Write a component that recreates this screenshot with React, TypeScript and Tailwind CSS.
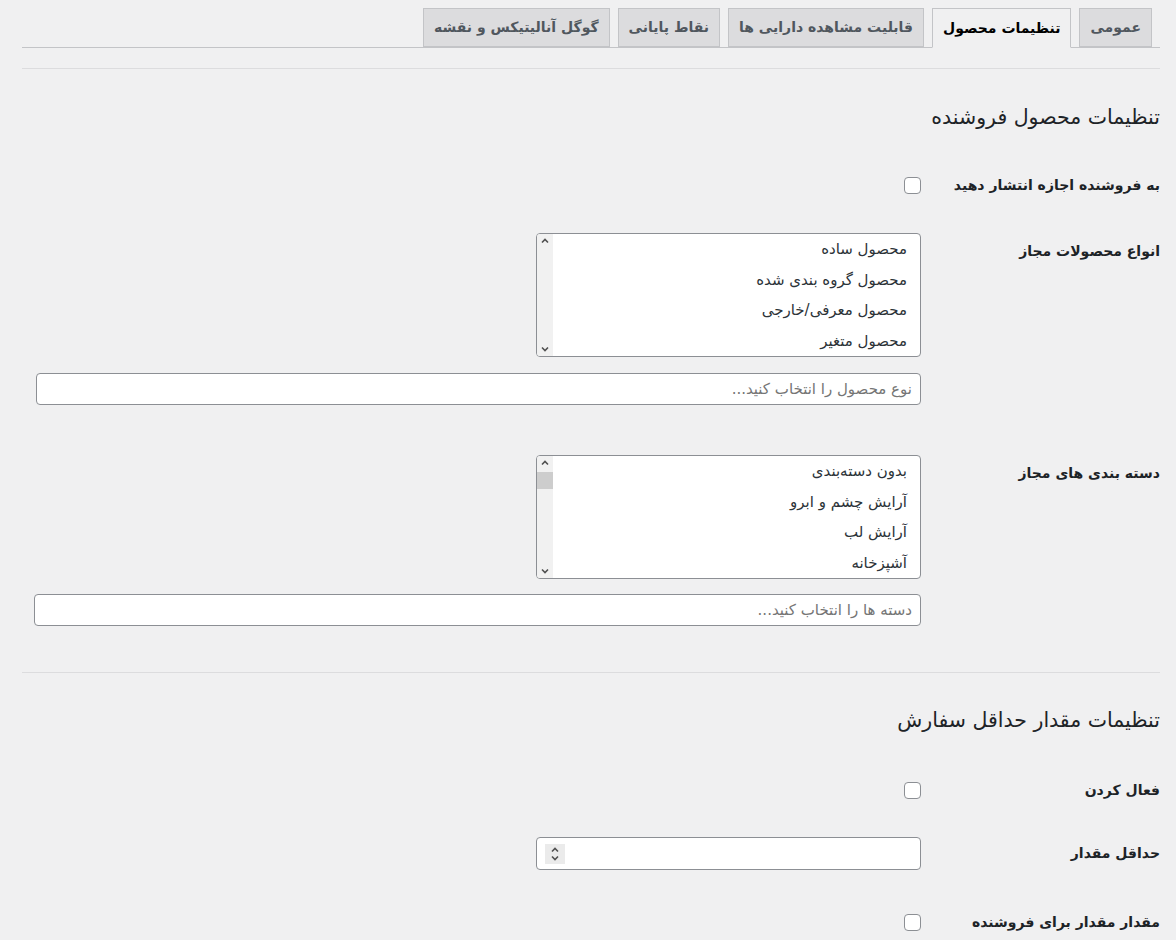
import React from "react";

/* ---------------- DATA ---------------- */
const tabs = [
    { label: "عمومی", active: false },
    { label: "تنظیمات محصول", active: true },
    { label: "قابلیت مشاهده دارایی ها", active: false },
    { label: "نقاط پایانی", active: false },
    { label: "گوگل آنالیتیکس و نقشه", active: false },
];

const productTypes = ["محصول ساده", "محصول گروه بندی شده", "محصول معرفی/خارجی", "محصول متغیر"];
const categories = ["بدون دسته‌بندی", "آرایش چشم و ابرو", "آرایش لب", "آشپزخانه"];

const font = { fontFamily: '"DejaVu Sans", "Noto Sans", sans-serif' };

/* ---------------- SMALL PARTS ---------------- */
function Chevron({ up }: { up?: boolean }) {
    return (
        <svg width="8" height="6" viewBox="0 0 8 6" className="text-[#505050]">
            <path
                d={up ? "M1 4.5 L4 1.5 L7 4.5" : "M1 1.5 L4 4.5 L7 1.5"}
                fill="none"
                stroke="currentColor"
                strokeWidth="1.6"
            />
        </svg>
    );
}

function Checkbox() {
    return <span className="block w-[17px] h-[17px] rounded-[4px] border border-[#8c8f94] bg-white" />;
}

function MultiSelect({ items, thumb }: { items: string[]; thumb?: boolean }) {
    return (
        <div className="w-[385px] h-[124px] border border-[#8c8f94] rounded-[4px] bg-white flex overflow-hidden">
            <div className="flex-1 flex flex-col">
                {items.map((item) => (
                    <div key={item} className="h-[30.5px] flex items-center pr-[13px] text-[15px] text-[#2c3338]">
                        {item}
                    </div>
                ))}
            </div>
            <div className="w-[16px] bg-[#f1f1f1] flex flex-col items-center justify-between py-[4px] relative">
                <Chevron up />
                {thumb && <div className="absolute left-0 right-0 top-[16px] h-[17px] bg-[#cdcdcd]" />}
                <Chevron />
            </div>
        </div>
    );
}

function SearchInput({ placeholder, width }: { placeholder: string; width: string }) {
    return (
        <div className={`${width} h-[32px] border border-[#8c8f94] rounded-[4px] bg-white flex items-center pr-[8px] text-[15px] text-[#757575]`}>
            {placeholder}
        </div>
    );
}

function Label({ children, top }: { children: React.ReactNode; top?: boolean }) {
    return (
        <div className={`w-[239px] shrink-0 text-[14px] font-bold text-[#1d2327] ${top ? "pt-[8px]" : ""}`}>
            {children}
        </div>
    );
}

/* ---------------- PAGE ---------------- */
export default function App() {
    return (
        <div dir="rtl" style={font} className="h-[940px] overflow-hidden bg-[#f0f0f1] pr-[16px] pl-[22px]">
            {/* TABS */}
            <nav className="flex gap-[8px] pt-[8px] pr-[8px] border-b border-[#c3c4c7]">
                {tabs.map((tab) => (
                    <div
                        key={tab.label}
                        className={
                            tab.active
                                ? "h-[40px] -mb-px flex items-center px-[10px] border border-[#c3c4c7] border-b-[#f0f0f1] bg-[#f0f0f1] text-[14px] font-bold text-black"
                                : "h-[39px] flex items-center px-[10px] border border-[#c3c4c7] bg-[#dcdcde] text-[14px] font-bold text-[#50575e]"
                        }
                    >
                        {tab.label}
                    </div>
                ))}
            </nav>

            <div className="mt-[20px] border-t border-[#dcdcde]" />

            {/* SELLER PRODUCT SETTINGS */}
            <h2 className="mt-[35px] h-[26px] leading-[26px] text-[20.5px] text-[#1d2327]">
                تنظیمات محصول فروشنده
            </h2>

            <div className="mt-[46px] flex items-center h-[18px]">
                <Label>به فروشنده اجازه انتشار دهید</Label>
                <Checkbox />
            </div>

            <div className="mt-[39px] flex">
                <Label top>انواع محصولات مجاز</Label>
                <div className="flex flex-col gap-[16px]">
                    <MultiSelect items={productTypes} />
                    <SearchInput placeholder="نوع محصول را انتخاب کنید..." width="w-[885px]" />
                </div>
            </div>

            <div className="mt-[50px] flex">
                <Label top>دسته بندی های مجاز</Label>
                <div className="flex flex-col gap-[15px]">
                    <MultiSelect items={categories} thumb />
                    <SearchInput placeholder="دسته ها را انتخاب کنید..." width="w-[887px]" />
                </div>
            </div>

            <div className="mt-[46px] border-t border-[#dcdcde]" />

            {/* MIN ORDER */}
            <h2 className="mt-[34px] h-[26px] leading-[26px] text-[20.5px] text-[#1d2327]">
                تنظیمات مقدار حداقل سفارش
            </h2>

            <div className="mt-[48px] flex items-center h-[18px]">
                <Label>فعال کردن</Label>
                <Checkbox />
            </div>

            <div className="mt-[38px] flex items-center">
                <Label>حداقل مقدار</Label>
                <div className="w-[385px] h-[33px] border border-[#8c8f94] rounded-[4px] bg-white flex items-center justify-end pl-[8px]">
                    <div className="w-[20px] h-[20px] bg-[#ebebeb] flex flex-col items-center justify-center gap-[2px]">
                        <Chevron up />
                        <Chevron />
                    </div>
                </div>
            </div>

            <div className="mt-[43px] flex items-center h-[18px]">
                <Label>مقدار مقدار برای فروشنده</Label>
                <Checkbox />
            </div>
        </div>
    );
}
